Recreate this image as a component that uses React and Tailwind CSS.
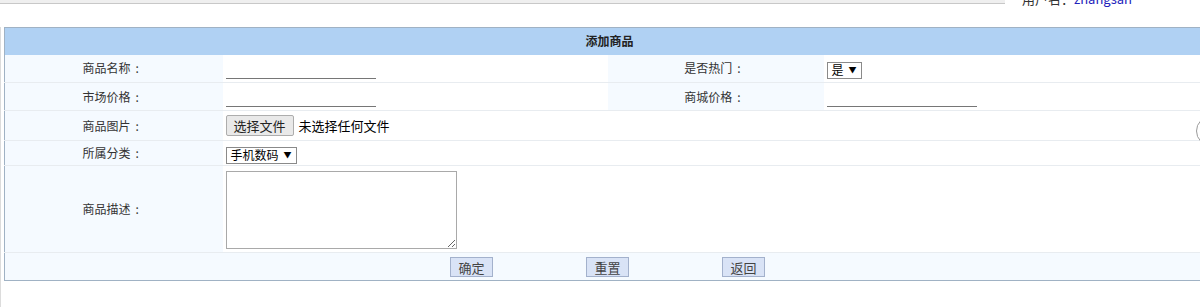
import React from 'react';

const Label = ({ children, className = '' }) => (
  <td className={`bg-[#f5faff] text-center text-[12px] text-[#333] ${className}`}>
    {children}
    <span className="ml-[5px] mr-[6px]">:</span>
  </td>
);

const LineInput = () => (
  <input
    type="text"
    className="ml-[3px] h-[20px] w-[150px] border-0 border-b border-[#767676] bg-transparent text-[12px] outline-none"
  />
);

const FakeSelect = ({ value }) => (
  <div className="ml-[3px] inline-flex h-[17px] items-center gap-[5px] border border-[#8a8a8a] bg-white pl-[4px] pr-[4px] text-[12px] leading-none text-black">
    <span>{value}</span>
    <span className="text-[8px]">▼</span>
  </div>
);

const FormButton = ({ children }) => (
  <button className="h-[20px] w-[43px] border border-[#a3b1cc] bg-[#d9e3f6] pt-[1px] text-[13px] leading-none text-[#444]">
    {children}
  </button>
);

const App = () => {
  return (
    <div
      className="relative h-[307px] w-[1200px] overflow-hidden bg-white"
      style={{ fontFamily: '"Noto Sans CJK SC", "Noto Sans", sans-serif' }}
    >
      {/* top strip */}
      <div className="flex h-[27px] items-start">
        <div className="h-[4px] w-[1005px] border-b border-[#c8c8c8] bg-[#efefef]" />
        <div className="-mt-[9px] ml-[17px] text-[13px] leading-[16px] text-[#333]">
          用户名：<span className="text-[#2222bb]">zhangsan</span>
        </div>
      </div>

      <div className="border-l border-[#dcdcdc] pl-[3px]">
        <table className="w-[1210px] table-fixed border-collapse border-y border-l border-[#a0b2c4]">
          <colgroup>
            <col className="w-[218px]" />
            <col className="w-[385px]" />
            <col className="w-[216px]" />
            <col />
          </colgroup>
          <tbody>
            <tr className="h-[27px] bg-[#b0d1f3]">
              <td colSpan={4} className="text-center text-[12px] font-bold text-[#222]">
                添加商品
              </td>
            </tr>
            <tr className="h-[28px] border-b border-[#e8ecf0]">
              <Label>商品名称</Label>
              <td className="bg-white align-bottom pb-[3px]">
                <LineInput />
              </td>
              <Label>是否热门</Label>
              <td className="bg-white">
                <FakeSelect value="是" />
              </td>
            </tr>
            <tr className="h-[28px] border-b border-[#e8ecf0]">
              <Label>市场价格</Label>
              <td className="bg-white align-bottom pb-[3px]">
                <LineInput />
              </td>
              <Label>商城价格</Label>
              <td className="bg-white align-bottom pb-[3px]">
                <LineInput />
              </td>
            </tr>
            <tr className="h-[30px] border-b border-[#e8ecf0]">
              <Label>商品图片</Label>
              <td colSpan={3} className="bg-white">
                <div className="flex items-center">
                  <button className="ml-[3px] h-[21px] w-[68px] rounded-[2px] border border-[#adadad] bg-[#e9e9e9] text-[13px] leading-none text-[#222]">
                    选择文件
                  </button>
                  <span className="ml-[5px] text-[13px] text-black">未选择任何文件</span>
                </div>
              </td>
            </tr>
            <tr className="h-[25px] border-b border-[#e8ecf0]">
              <Label>所属分类</Label>
              <td colSpan={3} className="bg-white">
                <FakeSelect value="手机数码" />
              </td>
            </tr>
            <tr className="h-[87px] border-b border-[#e8ecf0]">
              <Label>商品描述</Label>
              <td colSpan={3} className="bg-white">
                <textarea className="ml-[3px] mt-[2px] block h-[78px] w-[231px] border border-[#a9a9a9] bg-white" />
              </td>
            </tr>
            <tr className="h-[28px] bg-[#f5faff]">
              <td colSpan={4}>
                <div className="flex justify-center gap-[93px] pr-[4px]">
                  <FormButton>确定</FormButton>
                  <FormButton>重置</FormButton>
                  <FormButton>返回</FormButton>
                </div>
              </td>
            </tr>
          </tbody>
        </table>
        <div className="h-[30px]" />
      </div>

      {/* floating round button cut off at the right edge */}
      <div className="absolute left-[1196px] top-[116px] h-[30px] w-[30px] rounded-full border border-[#9a9a9a] bg-white" />
    </div>
  );
};

export default App;
